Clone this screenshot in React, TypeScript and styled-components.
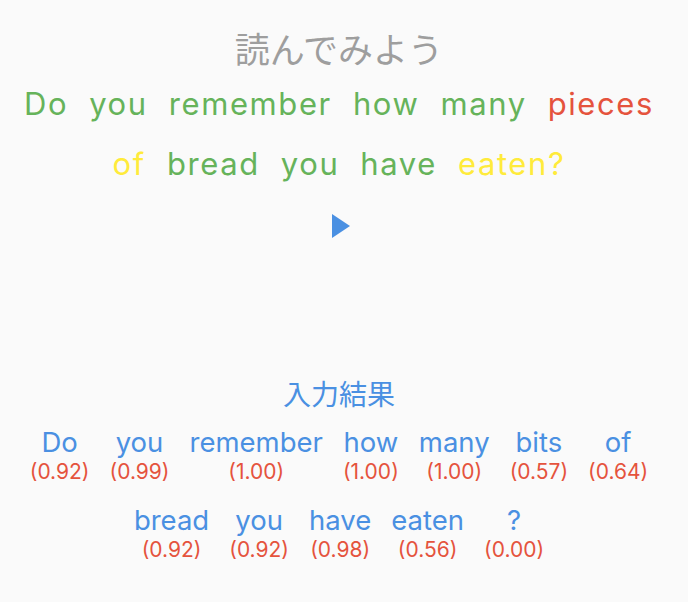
import React from "react";
import styled, { createGlobalStyle } from "styled-components";

const GlobalStyle = createGlobalStyle`
  html, body {
    margin: 0;
    padding: 0;
    background: #fafafa;
  }
  body {
    font-family: Inter, "Noto Sans CJK JP", sans-serif;
  }
`;

const Page = styled.div`
  box-sizing: border-box;
  width: 688px;
  height: 602px;
  padding-right: 10px;
  display: flex;
  flex-direction: column;
  align-items: center;
  overflow: hidden;
`;

const Title = styled.div`
  margin-top: 28px;
  font-family: "Noto Sans CJK JP", sans-serif;
  font-size: 35px;
  line-height: 40px;
  color: #9e9e9e;
`;

const Sentence = styled.div`
  margin-top: 6px;
  width: 670px;
  display: flex;
  flex-wrap: wrap;
  justify-content: center;
  column-gap: 21px;
`;

const Word = styled.span<{ $tone: "ok" | "warn" | "bad" }>`
  font-size: 31px;
  letter-spacing: 1.6px;
  line-height: 60px;
  color: ${(p) => (p.$tone === "ok" ? "#66b35a" : p.$tone === "warn" ? "#ffeb3b" : "#e5533d")};
`;

const PlayButton = styled.button`
  margin-top: 17px;
  margin-left: 4px;
  border: none;
  background: none;
  padding: 0;
  width: 30px;
  height: 30px;
  display: flex;
  align-items: center;
  justify-content: center;
  cursor: pointer;
`;

const ResultTitle = styled.div`
  margin-top: 134px;
  font-family: "Noto Sans CJK JP", sans-serif;
  font-size: 28px;
  line-height: 36px;
  color: #4a90e2;
`;

const ResultWrap = styled.div`
  margin-top: 16px;
  width: 670px;
  display: flex;
  flex-wrap: wrap;
  justify-content: center;
  column-gap: 20px;
  row-gap: 18px;
`;

const Token = styled.div`
  display: flex;
  flex-direction: column;
  align-items: center;
`;

const TokenWord = styled.span`
  font-size: 27.5px;
  line-height: 30px;
  color: #4a90e2;
`;

const Score = styled.span`
  font-size: 21px;
  line-height: 30px;
  color: #e5533d;
`;

const sentence: { text: string; tone: "ok" | "warn" | "bad" }[] = [
  { text: "Do", tone: "ok" },
  { text: "you", tone: "ok" },
  { text: "remember", tone: "ok" },
  { text: "how", tone: "ok" },
  { text: "many", tone: "ok" },
  { text: "pieces", tone: "bad" },
  { text: "of", tone: "warn" },
  { text: "bread", tone: "ok" },
  { text: "you", tone: "ok" },
  { text: "have", tone: "ok" },
  { text: "eaten?", tone: "warn" },
];

const results = [
  { word: "Do", score: 0.92 },
  { word: "you", score: 0.99 },
  { word: "remember", score: 1.0 },
  { word: "how", score: 1.0 },
  { word: "many", score: 1.0 },
  { word: "bits", score: 0.57 },
  { word: "of", score: 0.64 },
  { word: "bread", score: 0.92 },
  { word: "you", score: 0.92 },
  { word: "have", score: 0.98 },
  { word: "eaten", score: 0.56 },
  { word: "?", score: 0.0 },
];

export default function App() {
  return (
    <Page>
      <GlobalStyle />
      <Title>読んでみよう</Title>
      <Sentence>
        {sentence.map((w, i) => (
          <Word key={`${w.text}-${i}`} $tone={w.tone}>
            {w.text}
          </Word>
        ))}
      </Sentence>
      <PlayButton aria-label="play">
        <svg width="20" height="26" viewBox="0 0 20 26">
          <path d="M1 1 L19 13 L1 25 Z" fill="#4a90e2" />
        </svg>
      </PlayButton>
      <ResultTitle>入力結果</ResultTitle>
      <ResultWrap>
        {results.map((r, i) => (
          <Token key={`${r.word}-${i}`}>
            <TokenWord>{r.word}</TokenWord>
            <Score>({r.score.toFixed(2)})</Score>
          </Token>
        ))}
      </ResultWrap>
    </Page>
  );
}
